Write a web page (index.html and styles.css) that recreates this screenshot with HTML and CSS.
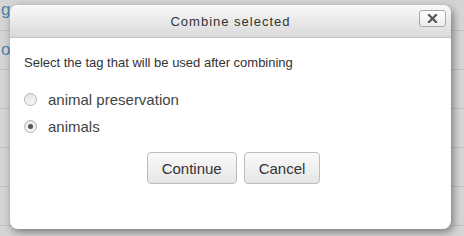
FILE: index.html
```html
<!DOCTYPE html>
<html lang="en">
  <head>
    <meta charset="UTF-8" />
    <title>Combine selected</title>
    <link rel="stylesheet" href="styles.css">
  </head>
  <body>
    <div class="list">
      <div class="row first"><span>g</span></div>
      <div class="row"><span>o</span></div>
      <div class="row"></div>
      <div class="row"></div>
      <div class="row"></div>
      <div class="row"></div>
    </div>

    <div class="dialog">
      <div class="dialogHeader">
        <span class="dialogTitle">Combine selected</span>
        <button class="closeButton" aria-label="Close">
          <svg width="11" height="9" viewBox="0 0 11 9">
            <path d="M2 1 L9 8 M9 1 L2 8" stroke="#555" stroke-width="2.2" stroke-linecap="square" />
          </svg>
        </button>
      </div>
      <div class="dialogBody">
        <p class="intro">Select the tag that will be used after combining</p>
        <label class="option">
          <span class="radio"></span>
          animal preservation
        </label>
        <label class="option">
          <span class="radio checked"></span>
          animals
        </label>
        <div class="dialogButtons">
          <button class="button">Continue</button>
          <button class="button">Cancel</button>
        </div>
      </div>
    </div>
  </body>
</html>
```

FILE: styles.css
```css
body,
html {
  margin: 0;
  padding: 0;
  width: 100%;
  height: 100%;
  overflow: hidden;
  background-color: #d5d5d5;
  font-family: 'Liberation Sans', arial, sans-serif;
  color: #333;
}

.list {
  display: flex;
  flex-direction: column;
}

.row {
  height: 38px;
  border-bottom: 1px solid #c2c2c2;
  display: flex;
  align-items: center;
  padding-left: 1px;
  font-size: 17px;
  color: #4d86ac;
}

.row.first {
  height: 30px;
  align-items: flex-start;
  padding-top: 0;
}

.dialog {
  position: absolute;
  left: 10px;
  top: 5px;
  width: 441px;
  height: 224px;
  background-color: #fff;
  border-radius: 8px;
  box-shadow: 2px 3px 8px rgba(0, 0, 0, 0.45);
  overflow: hidden;
}

.dialogHeader {
  position: relative;
  height: 32px;
  display: flex;
  align-items: center;
  justify-content: center;
  background: linear-gradient(#f9f9f9, #dadada);
  border-bottom: 1px solid #c4c4c4;
}

.dialogTitle {
  font-size: 13px;
  letter-spacing: 1px;
  color: #333;
}

.closeButton {
  position: absolute;
  right: 5px;
  top: 5px;
  width: 27px;
  height: 17px;
  padding: 0;
  display: flex;
  align-items: center;
  justify-content: center;
  border: 1px solid #a9a9a9;
  border-radius: 3px;
  background: linear-gradient(#fff, #ececec);
}

.dialogBody {
  padding: 17px 14px 0;
}

.intro {
  margin: 0 0 15px;
  font-size: 13px;
  line-height: 16px;
}

.option {
  display: flex;
  align-items: center;
  gap: 11px;
  height: 27px;
  font-size: 15px;
  color: #444;
}

.radio {
  width: 11px;
  height: 11px;
  border-radius: 50%;
  border: 1px solid #b5b5b5;
  background: linear-gradient(#e6e6e6, #f6f6f6);
  display: flex;
  align-items: center;
  justify-content: center;
}

.radio.checked::after {
  content: '';
  width: 5px;
  height: 5px;
  border-radius: 50%;
  background-color: #555;
}

.dialogButtons {
  display: flex;
  justify-content: center;
  gap: 7px;
  margin-top: 12px;
  padding-left: 6px;
}

.button {
  height: 32px;
  padding: 0 14px;
  font-family: 'Liberation Sans', arial, sans-serif;
  font-size: 15px;
  color: #333;
  border: 1px solid #bdbdbd;
  border-radius: 4px;
  background: linear-gradient(#fafafa, #e6e6e6);
}
```
